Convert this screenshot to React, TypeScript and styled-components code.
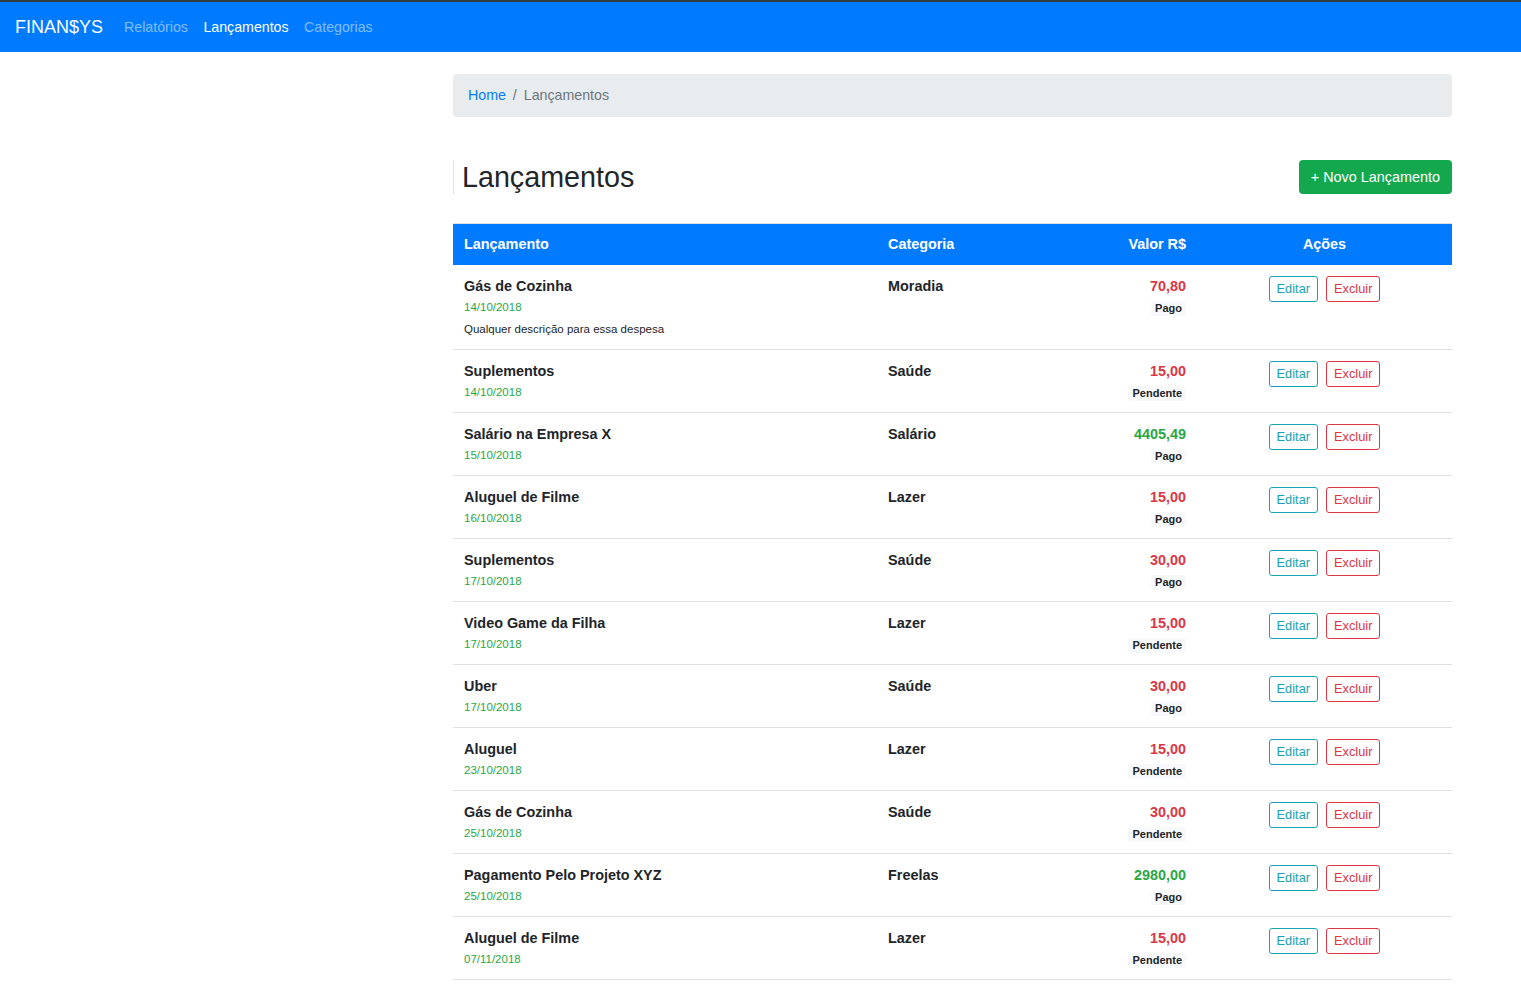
import React from "react";
import styled, { createGlobalStyle } from "styled-components";

const GlobalStyle = createGlobalStyle`
  html, body { margin: 0; padding: 0; background: #fff; }
  body {
    font-family: "Liberation Sans", Arial, Helvetica, sans-serif;
    font-size: 14.4px;
    line-height: 1.5;
    color: #212529;
  }
  * { box-sizing: border-box; }
`;

const Navbar = styled.nav`
  height: 52px;
  background: #007bff;
  border-top: 2px solid #343a40;
  display: flex;
  align-items: center;
  padding: 1px 15px 0;
`;

const Brand = styled.a`
  color: #fff;
  font-size: 18px;
  margin-right: 21px;
  text-decoration: none;
`;

const NavLinks = styled.div`
  display: flex;
  gap: 15.5px;
`;

const NavLink = styled.a<{ $active?: boolean }>`
  color: ${(p) => (p.$active ? "#fff" : "rgba(255,255,255,0.5)")};
  font-size: 14.2px;
  text-decoration: none;
`;

const Main = styled.main`
  width: 999px;
  margin: 22px 0 0 453px;
`;

const Breadcrumb = styled.ol`
  list-style: none;
  margin: 0;
  height: 43px;
  padding: 0 15px;
  display: flex;
  align-items: center;
  background: #e9ecef;
  border-radius: 4px;
  font-size: 14.2px;
`;

const Crumb = styled.li<{ $active?: boolean }>`
  color: ${(p) => (p.$active ? "#6c757d" : "#007bff")};
`;

const Separator = styled.li`
  color: #6c757d;
  padding: 0 7px;
`;

const Header = styled.div`
  margin-top: 43px;
  display: flex;
  justify-content: space-between;
  align-items: center;
  height: 34px;
`;

const Title = styled.h1`
  margin: 0;
  font-size: 28.7px;
  font-weight: 400;
  line-height: 34px;
  border-left: 1px solid #dee2e6;
  padding-left: 8px;
`;

const NewButton = styled.button`
  height: 34px;
  padding: 0 12px;
  border: none;
  border-radius: 4px;
  background: #13a84e;
  color: #fff;
  font-family: inherit;
  font-size: 14.4px;
`;

const Table = styled.div`
  margin-top: 29px;
  border-top: 1px solid #dee2e6;
`;

const cols = "424px 160px 160px 255px";

const HeadRow = styled.div`
  display: grid;
  grid-template-columns: ${cols};
  height: 41px;
  align-items: center;
  background: #007bff;
  color: #fff;
  font-weight: 700;
  font-size: 14.4px;
`;

const HeadCell = styled.div<{ $align?: string }>`
  padding: 0 11px;
  text-align: ${(p) => p.$align || "left"};
`;

const Row = styled.div`
  display: grid;
  grid-template-columns: ${cols};
  border-bottom: 1px solid #dee2e6;
  padding: 10px 0 9px;
`;

const Cell = styled.div<{ $align?: string }>`
  padding: 0 11px;
  text-align: ${(p) => p.$align || "left"};
`;

const Strong = styled.div<{ $color?: string }>`
  font-weight: 700;
  line-height: 22px;
  color: ${(p) => p.$color || "#212529"};
`;

const DateText = styled.div`
  font-size: 11.5px;
  color: #28a745;
  line-height: 21px;
`;

const Desc = styled.div`
  font-size: 11.5px;
  line-height: 22px;
`;

const BadgeLine = styled.div`
  line-height: 21px;
`;

const Badge = styled.span`
  display: inline-block;
  background: #f8f9fa;
  font-size: 11px;
  font-weight: 700;
  line-height: 1;
  padding: 2px 4px;
  border-radius: 3px;
  vertical-align: middle;
`;

const Actions = styled.div`
  display: flex;
  justify-content: center;
  gap: 8px;
  padding-top: 1px;
`;

const OutlineButton = styled.button<{ $color: string }>`
  height: 26px;
  padding: 0 7px;
  background: #fff;
  border: 1px solid ${(p) => p.$color};
  color: ${(p) => p.$color};
  border-radius: 3px;
  font-family: inherit;
  font-size: 12.8px;
  line-height: 24px;
`;

type Item = {
  name: string;
  date: string;
  desc?: string;
  cat: string;
  value: string;
  income?: boolean;
  paid: boolean;
};

const items: Item[] = [
  { name: "Gás de Cozinha", date: "14/10/2018", desc: "Qualquer descrição para essa despesa", cat: "Moradia", value: "70,80", paid: true },
  { name: "Suplementos", date: "14/10/2018", cat: "Saúde", value: "15,00", paid: false },
  { name: "Salário na Empresa X", date: "15/10/2018", cat: "Salário", value: "4405,49", income: true, paid: true },
  { name: "Aluguel de Filme", date: "16/10/2018", cat: "Lazer", value: "15,00", paid: true },
  { name: "Suplementos", date: "17/10/2018", cat: "Saúde", value: "30,00", paid: true },
  { name: "Video Game da Filha", date: "17/10/2018", cat: "Lazer", value: "15,00", paid: false },
  { name: "Uber", date: "17/10/2018", cat: "Saúde", value: "30,00", paid: true },
  { name: "Aluguel", date: "23/10/2018", cat: "Lazer", value: "15,00", paid: false },
  { name: "Gás de Cozinha", date: "25/10/2018", cat: "Saúde", value: "30,00", paid: false },
  { name: "Pagamento Pelo Projeto XYZ", date: "25/10/2018", cat: "Freelas", value: "2980,00", income: true, paid: true },
  { name: "Aluguel de Filme", date: "07/11/2018", cat: "Lazer", value: "15,00", paid: false },
];

export default function App() {
  return (
    <>
      <GlobalStyle />
      <Navbar>
        <Brand>FINAN$YS</Brand>
        <NavLinks>
          <NavLink>Relatórios</NavLink>
          <NavLink $active>Lançamentos</NavLink>
          <NavLink>Categorias</NavLink>
        </NavLinks>
      </Navbar>
      <Main>
        <Breadcrumb>
          <Crumb>Home</Crumb>
          <Separator>/</Separator>
          <Crumb $active>Lançamentos</Crumb>
        </Breadcrumb>
        <Header>
          <Title>Lançamentos</Title>
          <NewButton>+ Novo Lançamento</NewButton>
        </Header>
        <Table>
          <HeadRow>
            <HeadCell>Lançamento</HeadCell>
            <HeadCell>Categoria</HeadCell>
            <HeadCell $align="right">Valor R$</HeadCell>
            <HeadCell $align="center">Ações</HeadCell>
          </HeadRow>
          {items.map((it, i) => (
            <Row key={i}>
              <Cell>
                <Strong>{it.name}</Strong>
                <DateText>{it.date}</DateText>
                {it.desc && <Desc>{it.desc}</Desc>}
              </Cell>
              <Cell>
                <Strong>{it.cat}</Strong>
              </Cell>
              <Cell $align="right">
                <Strong $color={it.income ? "#28a745" : "#dc3545"}>{it.value}</Strong>
                <BadgeLine>
                  <Badge>{it.paid ? "Pago" : "Pendente"}</Badge>
                </BadgeLine>
              </Cell>
              <Cell>
                <Actions>
                  <OutlineButton $color="#17a2b8">Editar</OutlineButton>
                  <OutlineButton $color="#dc3545">Excluir</OutlineButton>
                </Actions>
              </Cell>
            </Row>
          ))}
        </Table>
      </Main>
    </>
  );
}
